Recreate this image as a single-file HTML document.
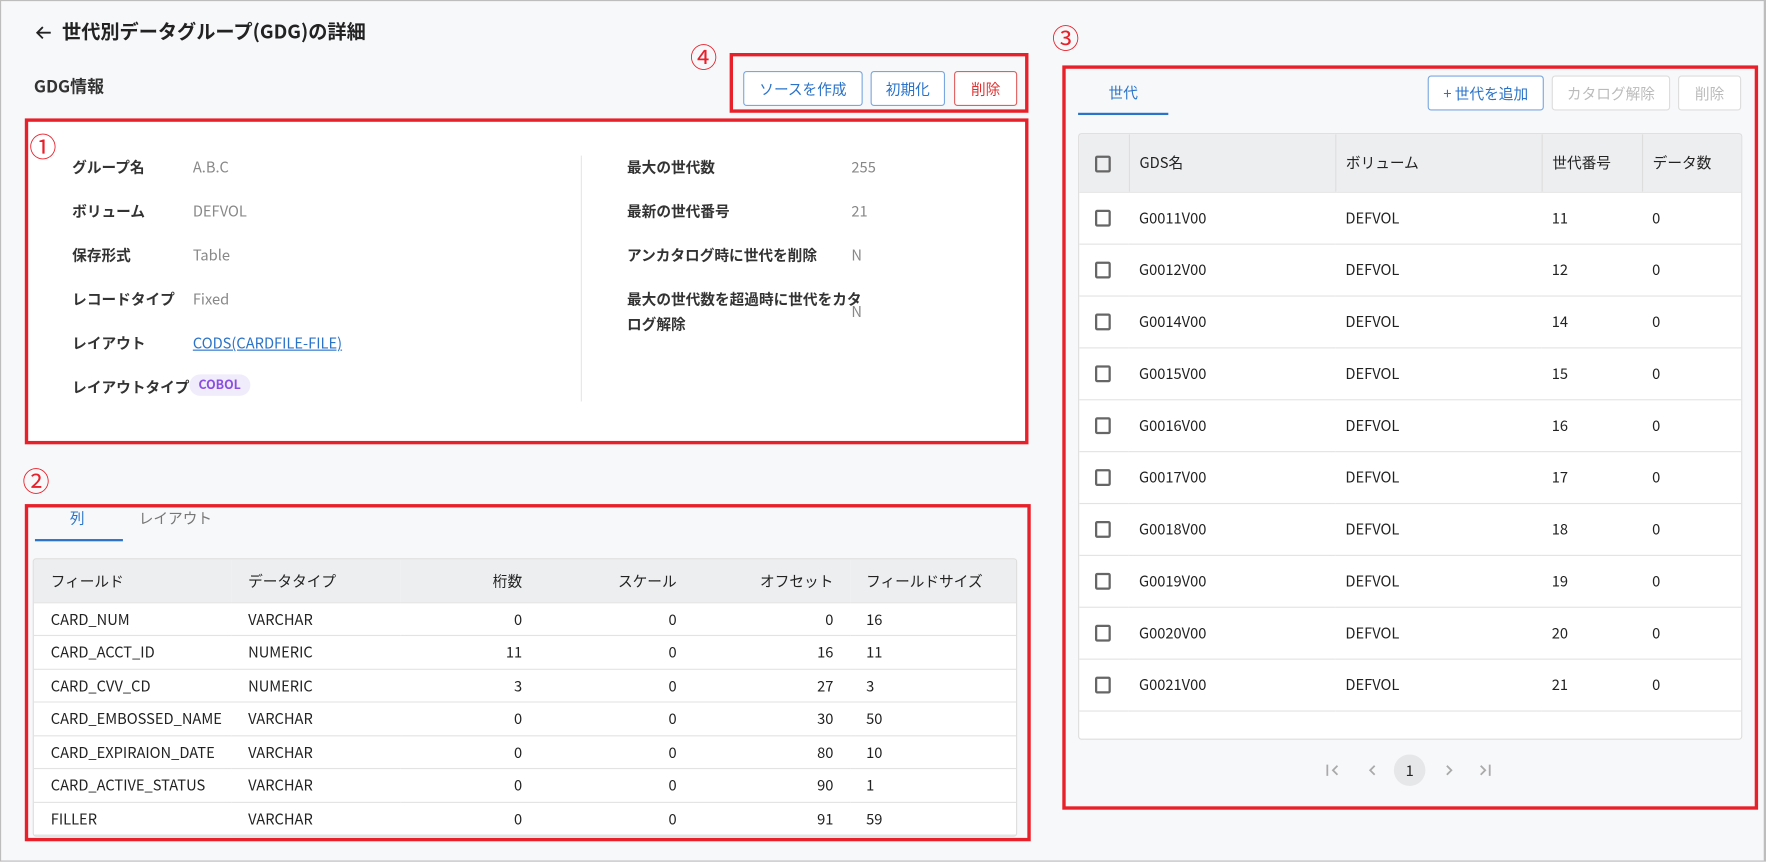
<!DOCTYPE html>
<html><head><meta charset="utf-8"><style>
*{box-sizing:border-box;margin:0;padding:0}
html,body{width:1766px;height:861px;overflow:hidden;background:#f7f8fa}
body{font-family:"Noto Sans CJK JP","Liberation Sans",sans-serif;color:#222;line-height:1.2}
#w{position:absolute;left:0;top:0;width:1566px;height:764px;transform:scale(1.12771);transform-origin:0 0;border:1px solid #bdbdbd;border-right-width:2px;background:#f7f8fa}
.a{position:absolute;white-space:nowrap}
.red{position:absolute;border:3px solid #e8202a}
.circ{position:absolute;font-size:24px;color:#e8202a;font-family:"Noto Sans CJK JP",sans-serif;line-height:1}
.btn{position:absolute;height:31px;border:1px solid #7aa7e0;border-radius:3px;background:#fff;color:#2a73c9;font-size:13px;display:flex;align-items:center;justify-content:center}
.lbl{font-size:13px;font-weight:bold;color:#333;line-height:16px}
.val{font-size:13px;color:#888;line-height:16px}
.t td,.t th{font-size:13px;font-weight:normal;color:#222;height:29.5px;padding:0 15px;border-bottom:1px solid #e3e3e3;text-align:left;white-space:nowrap}
.t th{background:#edeef0;height:38px}
.t{border-collapse:collapse;width:100%}
.r{text-align:right!important}
.cb{display:inline-block;width:14px;height:15px;border:2px solid #666;border-radius:2px;vertical-align:middle}
</style></head><body><div id="w">
<svg class="a" style="left:30px;top:21px" width="16" height="14" viewBox="0 0 16 14"><path d="M14 7H2M7 2L2 7l5 5" fill="none" stroke="#222" stroke-width="1.6"/></svg>
<div class="a" style="left:54px;top:16px;font-size:17px;font-weight:bold;color:#222">世代別データグループ(GDG)の詳細</div>
<div class="a" style="left:29px;top:67px;font-size:15px;font-weight:bold;color:#333">GDG情報</div>

<div class="circ" style="left:611px;top:37px">④</div>
<div class="red" style="left:646px;top:46px;width:265px;height:53px"></div>
<div class="btn" style="left:658px;top:62px;width:106px">ソースを作成</div>
<div class="btn" style="left:771px;top:62px;width:66px">初期化</div>
<div class="btn" style="left:845px;top:62px;width:56px;border-color:#e06060;color:#e03030">削除</div>

<div style="position:absolute;left:24px;top:107px;width:884px;height:283px;background:#fff"></div>
<div class="red" style="left:21px;top:104px;width:890px;height:289px"></div>
<div class="circ" style="left:25px;top:116px">①</div>
<div style="position:absolute;left:514px;top:137px;width:1px;height:218px;background:#e6e6e6"></div>
<div class="a lbl" style="left:63px;top:139px">グループ名</div><div class="a val" style="left:170px;top:139px">A.B.C</div>
<div class="a lbl" style="left:63px;top:178px">ボリューム</div><div class="a val" style="left:170px;top:178px">DEFVOL</div>
<div class="a lbl" style="left:63px;top:217px">保存形式</div><div class="a val" style="left:170px;top:217px">Table</div>
<div class="a lbl" style="left:63px;top:256px">レコードタイプ</div><div class="a val" style="left:170px;top:256px">Fixed</div>
<div class="a lbl" style="left:63px;top:295px">レイアウト</div><div class="a val" style="left:170px;top:295px;color:#2a73c9;text-decoration:underline">CODS(CARDFILE-FILE)</div>
<div class="a lbl" style="left:63px;top:334px">レイアウトタイプ</div><div class="a" style="left:167px;top:331px;background:#f0ecfb;color:#8a4fe0;font-size:11px;font-weight:bold;border-radius:10px;padding:3px 8px">COBOL</div>
<div class="a lbl" style="left:555px;top:139px">最大の世代数</div><div class="a val" style="left:754px;top:139px">255</div>
<div class="a lbl" style="left:555px;top:178px">最新の世代番号</div><div class="a val" style="left:754px;top:178px">21</div>
<div class="a lbl" style="left:555px;top:217px">アンカタログ時に世代を削除</div><div class="a val" style="left:754px;top:217px">N</div>
<div class="a lbl" style="left:555px;top:253px;line-height:22px">最大の世代数を超過時に世代をカタ<br>ログ解除</div><div class="a val" style="left:754px;top:267px">N</div>

<div class="circ" style="left:19px;top:413px">②</div>
<div class="red" style="left:21px;top:446px;width:892px;height:299px"></div>
<div class="a" style="left:61px;top:450px;font-size:13px;color:#2a73c9">列</div>
<div class="a" style="left:122px;top:450px;font-size:13px;color:#777">レイアウト</div>
<div style="position:absolute;left:30px;top:477px;width:78px;height:2px;background:#2a73c9"></div>
<div style="position:absolute;left:28px;top:494px;width:873px;border:1px solid #ddd;border-radius:3px;background:#fff;overflow:hidden">
<table class="t" style="table-layout:fixed"><colgroup><col style="width:175px"><col style="width:150px"><col style="width:123px"><col style="width:137px"><col style="width:139px"><col></colgroup>
<tr><th>フィールド</th><th>データタイプ</th><th class="r">桁数</th><th class="r">スケール</th><th class="r">オフセット</th><th style="padding-left:14px">フィールドサイズ</th></tr>
<tr><td>CARD_NUM</td><td>VARCHAR</td><td class="r">0</td><td class="r">0</td><td class="r">0</td><td style="padding-left:14px">16</td></tr>
<tr><td>CARD_ACCT_ID</td><td>NUMERIC</td><td class="r">11</td><td class="r">0</td><td class="r">16</td><td style="padding-left:14px">11</td></tr>
<tr><td>CARD_CVV_CD</td><td>NUMERIC</td><td class="r">3</td><td class="r">0</td><td class="r">27</td><td style="padding-left:14px">3</td></tr>
<tr><td>CARD_EMBOSSED_NAME</td><td>VARCHAR</td><td class="r">0</td><td class="r">0</td><td class="r">30</td><td style="padding-left:14px">50</td></tr>
<tr><td>CARD_EXPIRAION_DATE</td><td>VARCHAR</td><td class="r">0</td><td class="r">0</td><td class="r">80</td><td style="padding-left:14px">10</td></tr>
<tr><td>CARD_ACTIVE_STATUS</td><td>VARCHAR</td><td class="r">0</td><td class="r">0</td><td class="r">90</td><td style="padding-left:14px">1</td></tr>
<tr><td>FILLER</td><td>VARCHAR</td><td class="r">0</td><td class="r">0</td><td class="r">91</td><td style="padding-left:14px">59</td></tr>
</table></div>

<div class="circ" style="left:932px;top:20px">③</div>
<div class="red" style="left:941px;top:57px;width:617px;height:660px"></div>
<div class="a" style="left:982px;top:73px;font-size:13px;color:#2a73c9">世代</div>
<div style="position:absolute;left:955px;top:99px;width:80px;height:2px;background:#2a73c9"></div>
<div class="btn" style="left:1265px;top:66px;width:103px">+ 世代を追加</div>
<div class="btn" style="left:1375px;top:66px;width:105px;border-color:#ddd;color:#bbb">カタログ解除</div>
<div class="btn" style="left:1487px;top:66px;width:56px;border-color:#ddd;color:#bbb">削除</div>
<div style="position:absolute;left:955px;top:117px;width:589px;height:538px;border:1px solid #ddd;border-radius:3px;background:#fff;overflow:hidden">
<table class="t" style="table-layout:fixed">
<colgroup><col style="width:44px"><col style="width:183px"><col style="width:183px"><col style="width:89px"><col></colgroup>
<tr><th style="height:51px;padding-left:14px"><span class="cb"></span></th><th style="border-left:1px solid #ddd;padding-left:9px">GDS名</th><th style="border-left:1px solid #ddd;padding-left:9px">ボリューム</th><th style="border-left:1px solid #ddd;padding-left:9px">世代番号</th><th style="border-left:1px solid #ddd;padding-left:9px">データ数</th></tr>
<tr><td style="height:46px;padding-left:14px"><span class="cb"></span></td><td style="padding-left:9px">G0011V00</td><td style="padding-left:9px">DEFVOL</td><td style="padding-left:9px">11</td><td style="padding-left:9px">0</td></tr>
<tr><td style="height:46px;padding-left:14px"><span class="cb"></span></td><td style="padding-left:9px">G0012V00</td><td style="padding-left:9px">DEFVOL</td><td style="padding-left:9px">12</td><td style="padding-left:9px">0</td></tr>
<tr><td style="height:46px;padding-left:14px"><span class="cb"></span></td><td style="padding-left:9px">G0014V00</td><td style="padding-left:9px">DEFVOL</td><td style="padding-left:9px">14</td><td style="padding-left:9px">0</td></tr>
<tr><td style="height:46px;padding-left:14px"><span class="cb"></span></td><td style="padding-left:9px">G0015V00</td><td style="padding-left:9px">DEFVOL</td><td style="padding-left:9px">15</td><td style="padding-left:9px">0</td></tr>
<tr><td style="height:46px;padding-left:14px"><span class="cb"></span></td><td style="padding-left:9px">G0016V00</td><td style="padding-left:9px">DEFVOL</td><td style="padding-left:9px">16</td><td style="padding-left:9px">0</td></tr>
<tr><td style="height:46px;padding-left:14px"><span class="cb"></span></td><td style="padding-left:9px">G0017V00</td><td style="padding-left:9px">DEFVOL</td><td style="padding-left:9px">17</td><td style="padding-left:9px">0</td></tr>
<tr><td style="height:46px;padding-left:14px"><span class="cb"></span></td><td style="padding-left:9px">G0018V00</td><td style="padding-left:9px">DEFVOL</td><td style="padding-left:9px">18</td><td style="padding-left:9px">0</td></tr>
<tr><td style="height:46px;padding-left:14px"><span class="cb"></span></td><td style="padding-left:9px">G0019V00</td><td style="padding-left:9px">DEFVOL</td><td style="padding-left:9px">19</td><td style="padding-left:9px">0</td></tr>
<tr><td style="height:46px;padding-left:14px"><span class="cb"></span></td><td style="padding-left:9px">G0020V00</td><td style="padding-left:9px">DEFVOL</td><td style="padding-left:9px">20</td><td style="padding-left:9px">0</td></tr>
<tr><td style="height:46px;padding-left:14px"><span class="cb"></span></td><td style="padding-left:9px">G0021V00</td><td style="padding-left:9px">DEFVOL</td><td style="padding-left:9px">21</td><td style="padding-left:9px">0</td></tr>
</table></div>
<svg class="a" style="left:1175px;top:676px" width="150" height="12" viewBox="0 0 150 12" fill="none" stroke="#aaa" stroke-width="1.6">
<path d="M1 1v10M10 2L6 6l4 4"/>
<path d="M43 2L39 6l4 4"/>
<path d="M107 2l4 4-4 4"/>
<path d="M137 2l4 4-4 4M145 1v10"/>
</svg>
<div class="a" style="left:1235px;top:668px;width:28px;height:28px;border-radius:14px;background:#e6e7e9;font-size:13px;text-align:center;line-height:28px">1</div>
</div></body></html>
